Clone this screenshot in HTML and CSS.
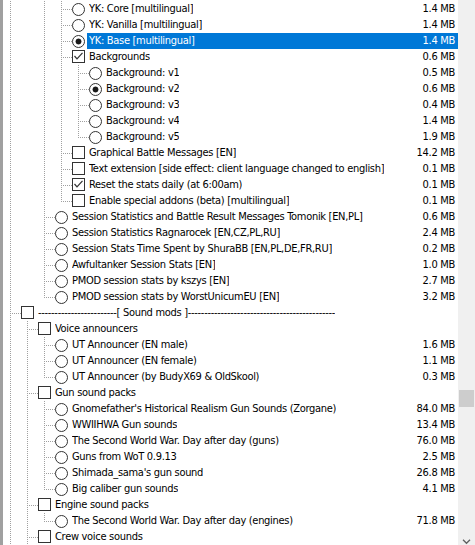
FILE: index.html
```html
<!DOCTYPE html>
<html>
<head>
<meta charset="utf-8">
<link rel="stylesheet" href="styles.css">
</head>
<body>
<div class="window">
  <div class="tree">
    <div class="row"><span class="g v"></span><span class="g"></span><span class="g v"></span><span class="g t"></span><span class="radio"></span><span class="lbl"><span class="name">YK: Core [multilingual]</span><span class="size">1.4 MB</span></span></div>
    <div class="row"><span class="g v"></span><span class="g"></span><span class="g v"></span><span class="g t"></span><span class="radio"></span><span class="lbl"><span class="name">YK: Vanilla [multilingual]</span><span class="size">1.4 MB</span></span></div>
    <div class="row"><span class="g v"></span><span class="g"></span><span class="g v"></span><span class="g t"></span><span class="radio on"></span><span class="lbl sel"><span class="name">YK: Base [multilingual]</span><span class="size">1.4 MB</span></span></div>
    <div class="row"><span class="g v"></span><span class="g"></span><span class="g v"></span><span class="g t"></span><span class="check on"><svg viewBox="0 0 11 11" width="11" height="11"><polyline points="1.5,5 4,7.8 9.5,1.8" /></svg></span><span class="lbl"><span class="name">Backgrounds</span><span class="size">0.6 MB</span></span></div>
    <div class="row"><span class="g v"></span><span class="g"></span><span class="g v"></span><span class="g v"></span><span class="g t"></span><span class="radio"></span><span class="lbl"><span class="name">Background: v1</span><span class="size">0.5 MB</span></span></div>
    <div class="row"><span class="g v"></span><span class="g"></span><span class="g v"></span><span class="g v"></span><span class="g t"></span><span class="radio on"></span><span class="lbl"><span class="name">Background: v2</span><span class="size">0.6 MB</span></span></div>
    <div class="row"><span class="g v"></span><span class="g"></span><span class="g v"></span><span class="g v"></span><span class="g t"></span><span class="radio"></span><span class="lbl"><span class="name">Background: v3</span><span class="size">0.4 MB</span></span></div>
    <div class="row"><span class="g v"></span><span class="g"></span><span class="g v"></span><span class="g v"></span><span class="g t"></span><span class="radio"></span><span class="lbl"><span class="name">Background: v4</span><span class="size">1.4 MB</span></span></div>
    <div class="row"><span class="g v"></span><span class="g"></span><span class="g v"></span><span class="g v"></span><span class="g l"></span><span class="radio"></span><span class="lbl"><span class="name">Background: v5</span><span class="size">1.9 MB</span></span></div>
    <div class="row"><span class="g v"></span><span class="g"></span><span class="g v"></span><span class="g t"></span><span class="check"></span><span class="lbl"><span class="name">Graphical Battle Messages [EN]</span><span class="size">14.2 MB</span></span></div>
    <div class="row"><span class="g v"></span><span class="g"></span><span class="g v"></span><span class="g t"></span><span class="check"></span><span class="lbl"><span class="name">Text extension [side effect: client language changed to english]</span><span class="size">0.1 MB</span></span></div>
    <div class="row"><span class="g v"></span><span class="g"></span><span class="g v"></span><span class="g t"></span><span class="check on"><svg viewBox="0 0 11 11" width="11" height="11"><polyline points="1.5,5 4,7.8 9.5,1.8" /></svg></span><span class="lbl"><span class="name">Reset the stats daily (at 6:00am)</span><span class="size">0.1 MB</span></span></div>
    <div class="row"><span class="g v"></span><span class="g"></span><span class="g v"></span><span class="g l"></span><span class="check"></span><span class="lbl"><span class="name">Enable special addons (beta) [multilingual]</span><span class="size">0.1 MB</span></span></div>
    <div class="row"><span class="g v"></span><span class="g"></span><span class="g t"></span><span class="radio"></span><span class="lbl"><span class="name">Session Statistics and Battle Result Messages Tomonik [EN,PL]</span><span class="size">0.6 MB</span></span></div>
    <div class="row"><span class="g v"></span><span class="g"></span><span class="g t"></span><span class="radio"></span><span class="lbl"><span class="name">Session Statistics Ragnarocek [EN,CZ,PL,RU]</span><span class="size">2.4 MB</span></span></div>
    <div class="row"><span class="g v"></span><span class="g"></span><span class="g t"></span><span class="radio"></span><span class="lbl"><span class="name">Session Stats Time Spent by ShuraBB [EN,PL,DE,FR,RU]</span><span class="size">0.2 MB</span></span></div>
    <div class="row"><span class="g v"></span><span class="g"></span><span class="g t"></span><span class="radio"></span><span class="lbl"><span class="name">Awfultanker Session Stats [EN]</span><span class="size">1.0 MB</span></span></div>
    <div class="row"><span class="g v"></span><span class="g"></span><span class="g t"></span><span class="radio"></span><span class="lbl"><span class="name">PMOD session stats by kszys [EN]</span><span class="size">2.7 MB</span></span></div>
    <div class="row"><span class="g v"></span><span class="g"></span><span class="g l"></span><span class="radio"></span><span class="lbl"><span class="name">PMOD session stats by WorstUnicumEU [EN]</span><span class="size">3.2 MB</span></span></div>
    <div class="row"><span class="g t"></span><span class="check"></span><span class="lbl"><span class="name">------------------------[ Sound mods ]---------------------------------------------</span><span class="size"></span></span></div>
    <div class="row"><span class="g v"></span><span class="g t"></span><span class="check"></span><span class="lbl"><span class="name">Voice announcers</span><span class="size"></span></span></div>
    <div class="row"><span class="g v"></span><span class="g v"></span><span class="g t"></span><span class="radio"></span><span class="lbl"><span class="name">UT Announcer (EN male)</span><span class="size">1.6 MB</span></span></div>
    <div class="row"><span class="g v"></span><span class="g v"></span><span class="g t"></span><span class="radio"></span><span class="lbl"><span class="name">UT Announcer (EN female)</span><span class="size">1.1 MB</span></span></div>
    <div class="row"><span class="g v"></span><span class="g v"></span><span class="g l"></span><span class="radio"></span><span class="lbl"><span class="name">UT Announcer (by BudyX69 &amp; OldSkool)</span><span class="size">0.3 MB</span></span></div>
    <div class="row"><span class="g v"></span><span class="g t"></span><span class="check"></span><span class="lbl"><span class="name">Gun sound packs</span><span class="size"></span></span></div>
    <div class="row"><span class="g v"></span><span class="g v"></span><span class="g t"></span><span class="radio"></span><span class="lbl"><span class="name">Gnomefather's Historical Realism Gun Sounds (Zorgane)</span><span class="size">84.0 MB</span></span></div>
    <div class="row"><span class="g v"></span><span class="g v"></span><span class="g t"></span><span class="radio"></span><span class="lbl"><span class="name">WWIIHWA Gun sounds</span><span class="size">13.4 MB</span></span></div>
    <div class="row"><span class="g v"></span><span class="g v"></span><span class="g t"></span><span class="radio"></span><span class="lbl"><span class="name">The Second World War. Day after day (guns)</span><span class="size">76.0 MB</span></span></div>
    <div class="row"><span class="g v"></span><span class="g v"></span><span class="g t"></span><span class="radio"></span><span class="lbl"><span class="name">Guns from WoT 0.9.13</span><span class="size">2.5 MB</span></span></div>
    <div class="row"><span class="g v"></span><span class="g v"></span><span class="g t"></span><span class="radio"></span><span class="lbl"><span class="name">Shimada_sama's gun sound</span><span class="size">26.8 MB</span></span></div>
    <div class="row"><span class="g v"></span><span class="g v"></span><span class="g l"></span><span class="radio"></span><span class="lbl"><span class="name">Big caliber gun sounds</span><span class="size">4.1 MB</span></span></div>
    <div class="row"><span class="g v"></span><span class="g t"></span><span class="check"></span><span class="lbl"><span class="name">Engine sound packs</span><span class="size"></span></span></div>
    <div class="row"><span class="g v"></span><span class="g v"></span><span class="g l"></span><span class="radio"></span><span class="lbl"><span class="name">The Second World War. Day after day (engines)</span><span class="size">71.8 MB</span></span></div>
    <div class="row"><span class="g v"></span><span class="g t"></span><span class="check"></span><span class="lbl"><span class="name">Crew voice sounds</span><span class="size"></span></span></div>
    <div class="row"><span class="g v"></span><span class="g v"></span><span class="g t"></span><span class="radio"></span><span class="lbl"><span class="name"></span><span class="size"></span></span></div>
  </div>
  <div class="sb">
    <div class="thumb"></div>
    <svg class="arrow" width="17" height="6" viewBox="0 0 17 6"><polyline points="5,0.8 8.5,4.3 12,0.8" /></svg>
  </div>
</div>
</body>
</html>
```
FILE: styles.css
```css
html, body {
  margin: 0;
  padding: 0;
  background: #ffffff;
}
body {
  width: 475px;
  height: 545px;
  overflow: hidden;
  font-family: "DejaVu Sans Condensed", "DejaVu Sans", sans-serif;
  font-stretch: condensed;
  font-size: 11px;
  letter-spacing: -0.3px;
  color: #000000;
}
.window {
  display: flex;
  height: 545px;
  border-left: 3px solid #a0a0a0;
  box-sizing: border-box;
}
.tree {
  flex: 1;
  min-width: 0;
  padding: 1px 0 0 1px;
  overflow: hidden;
}
.row {
  display: flex;
  height: 16px;
  align-items: flex-start;
}
.g {
  flex: 0 0 17px;
  height: 16px;
}
.g.v {
  background: repeating-linear-gradient(to bottom, #a0a0a0 0 1px, transparent 1px 2px) 6px 0 / 1px 16px no-repeat;
}
.g.t {
  background:
    repeating-linear-gradient(to bottom, #a0a0a0 0 1px, transparent 1px 2px) 6px 0 / 1px 16px no-repeat,
    repeating-linear-gradient(to right, #a0a0a0 0 1px, transparent 1px 2px) 8px 8px / 9px 1px no-repeat;
}
.g.l {
  background:
    repeating-linear-gradient(to bottom, #a0a0a0 0 1px, transparent 1px 2px) 6px 0 / 1px 9px no-repeat,
    repeating-linear-gradient(to right, #a0a0a0 0 1px, transparent 1px 2px) 8px 8px / 9px 1px no-repeat;
}
.radio {
  flex: 0 0 13px;
  height: 13px;
  margin-top: 2px;
  box-sizing: border-box;
  border: 1px solid #333333;
  border-radius: 50%;
  background: #ffffff;
}
.radio.on {
  background: radial-gradient(circle at 50% 50%, #1a1a1a 0 2.6px, #ffffff 3.3px);
}
.check {
  flex: 0 0 13px;
  height: 13px;
  margin-top: 1px;
  box-sizing: border-box;
  border: 1px solid #333333;
  background: #ffffff;
  display: flex;
}
.check svg polyline {
  fill: none;
  stroke: #333333;
  stroke-width: 1.25;
}
.lbl {
  flex: 1;
  min-width: 0;
  display: flex;
  justify-content: space-between;
  margin-left: 2px;
  padding: 0 3px 0 2px;
  height: 16px;
  line-height: 16px;
  white-space: nowrap;
}
.lbl.sel {
  background: #0078d7;
  color: #ffffff;
}
.name {
  overflow: hidden;
}
.size {
  flex: none;
  padding-left: 8px;
}
.sb {
  flex: 0 0 17px;
  background: #f0f0f0;
  display: flex;
  flex-direction: column;
  align-items: flex-start;
}
.thumb {
  margin-top: 390px;
  margin-left: 1px;
  width: 15px;
  height: 17px;
  background: #cdcdcd;
}
.arrow {
  margin-top: auto;
}
.arrow polyline {
  fill: none;
  stroke: #606060;
  stroke-width: 1.3;
}
```
